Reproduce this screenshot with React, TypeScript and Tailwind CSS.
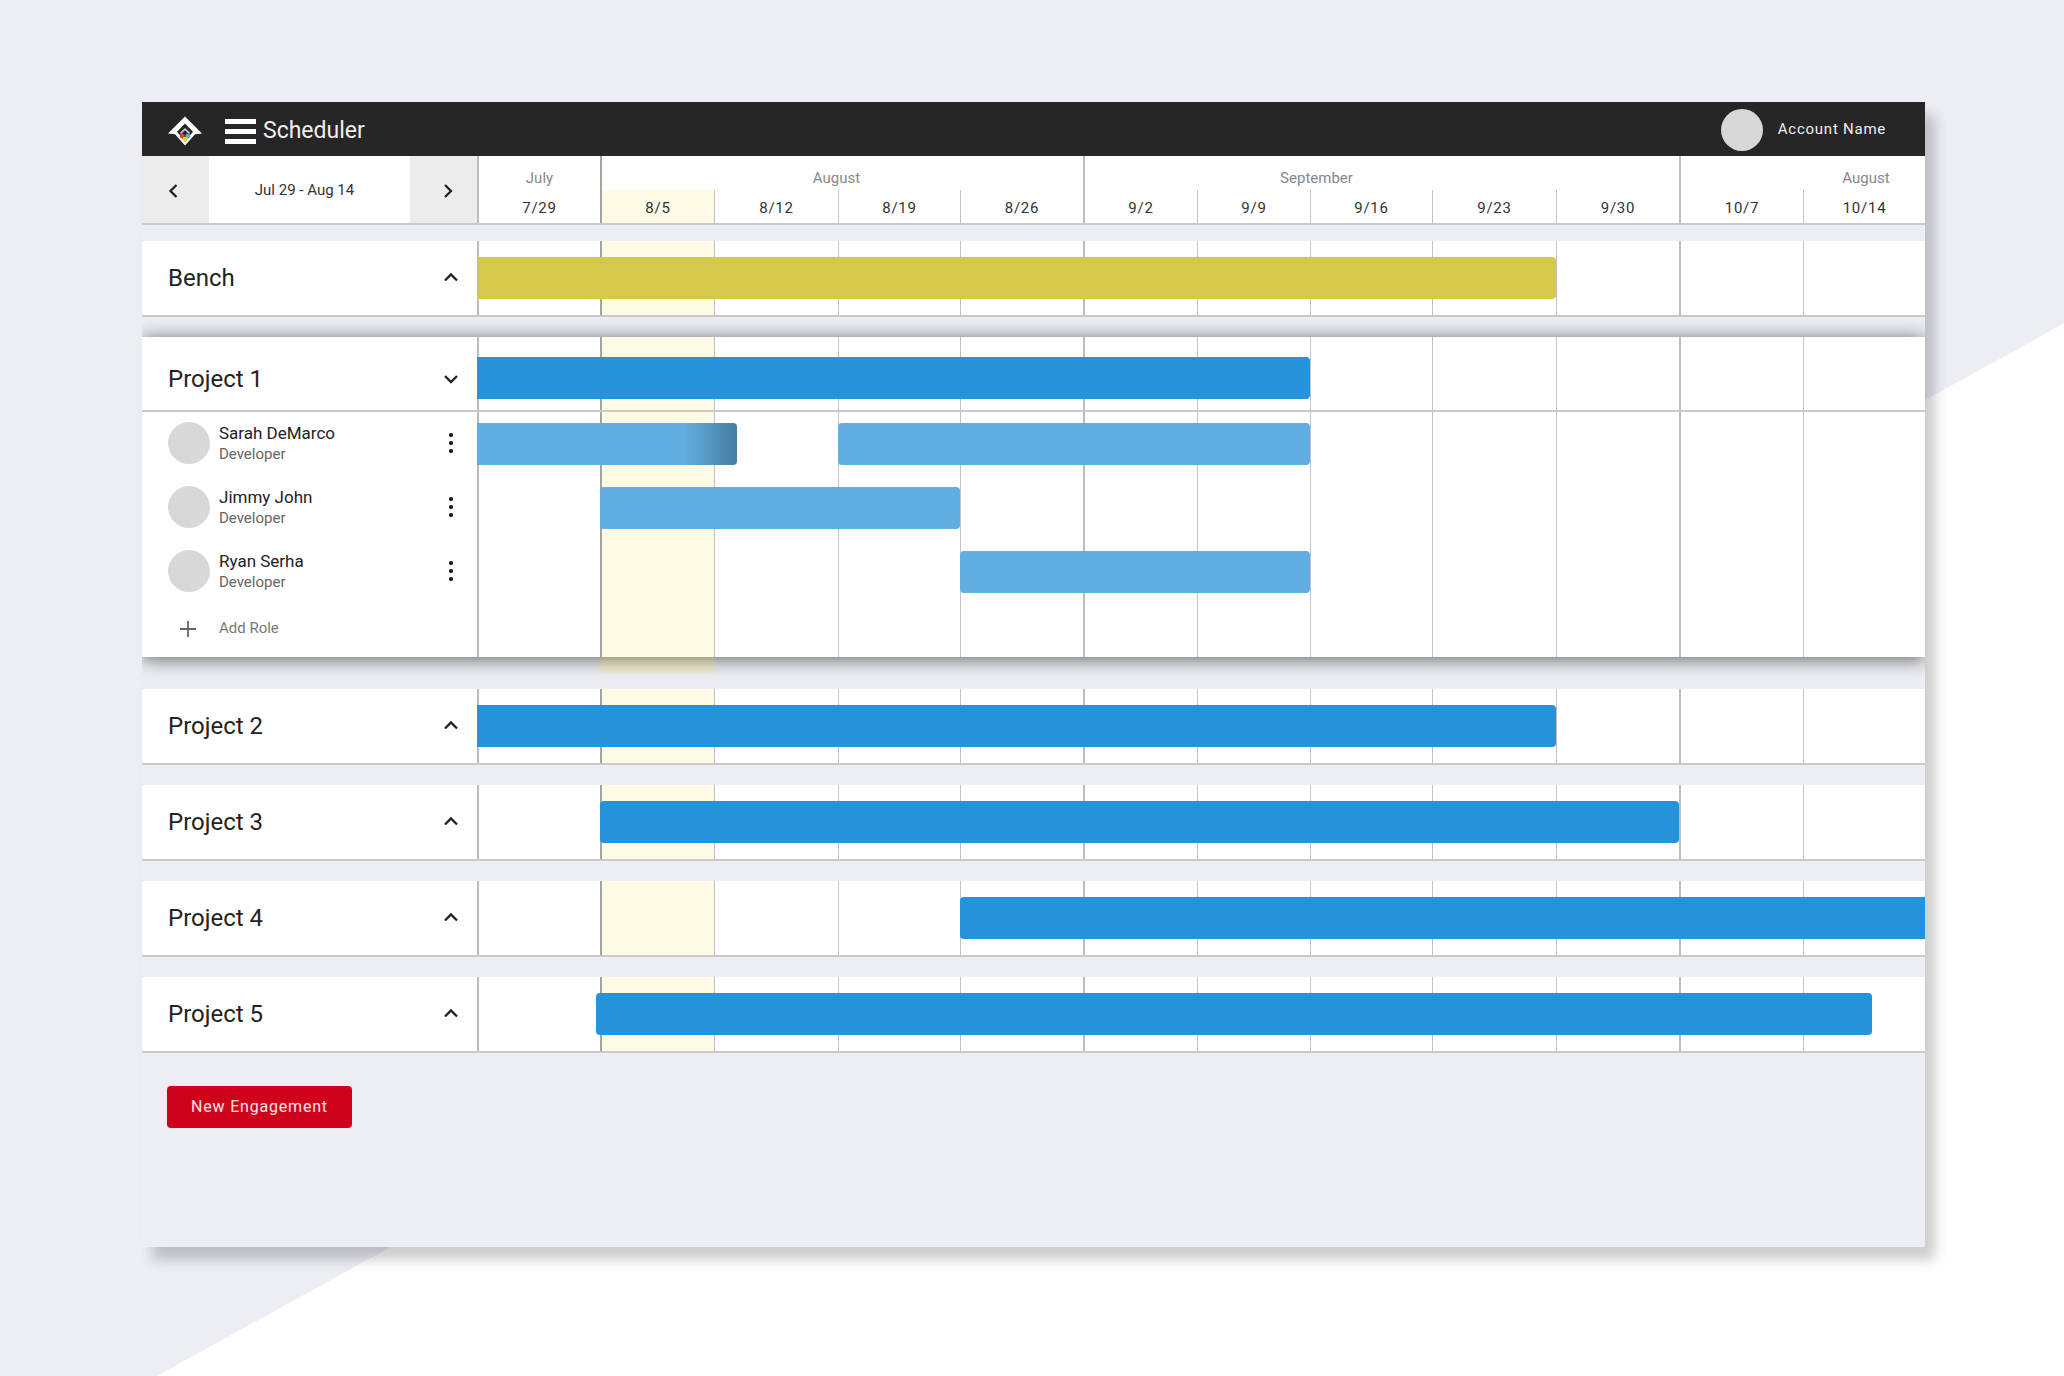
import React from "react";

type Bar = { from: number; to: number; tone?: "gold" | "blue" | "light"; fill?: number; fade?: boolean; early?: boolean };
type Member = { name: string; role: string; bars: Bar[] };
type Engagement = { name: string; bars: Bar[]; members?: Member[] };

const weeks = ["7/29", "8/5", "8/12", "8/19", "8/26", "9/2", "9/9", "9/16", "9/23", "9/30", "10/7", "10/14"];
const currentWeek = 1;
const monthStarts = [0, 1, 5, 10];

const bench: Engagement = { name: "Bench", bars: [{ from: 1, to: 10, tone: "gold" }] };
const project1: Engagement = {
  name: "Project 1",
  bars: [{ from: 1, to: 8 }],
  members: [
    {
      name: "Sarah DeMarco",
      role: "Developer",
      bars: [
        { from: 1, to: 4, tone: "light", fill: 72, fade: true },
        { from: 4, to: 8, tone: "light" },
      ],
    },
    { name: "Jimmy John", role: "Developer", bars: [{ from: 2, to: 5, tone: "light" }] },
    { name: "Ryan Serha", role: "Developer", bars: [{ from: 5, to: 8, tone: "light" }] },
  ],
};
const projects: Engagement[] = [
  { name: "Project 2", bars: [{ from: 1, to: 10 }] },
  { name: "Project 3", bars: [{ from: 2, to: 11 }] },
  { name: "Project 4", bars: [{ from: 5, to: 13 }] },
  { name: "Project 5", bars: [{ from: 2, to: 13, fill: 96, early: true }] },
];

const rowGrid = "grid grid-cols-[335px_minmax(0,1fr)]";
const weekGrid =
  "grid grid-cols-[123fr_114fr_124fr_122fr_123fr_114fr_113fr_122fr_124fr_123fr_124fr_122fr]";
const tones = { gold: "bg-[#d4c94b]", blue: "bg-[#2593d9]", light: "bg-[#62aee0]" };

function lineClass(i: number) {
  if (i === currentWeek) return "border-l-2 border-[#a5a5a0]";
  if (monthStarts.includes(i)) return "border-l-2 border-[#bdbdbd]";
  return "border-l border-[#c2c2c2]";
}

function Timeline({ bars = [], pad = "" }: { bars?: Bar[]; pad?: string }) {
  return (
    <div className={`${weekGrid} grid-rows-[minmax(0,1fr)]`}>
      {weeks.map((w, i) => (
        <div
          key={w}
          className={`row-start-1 ${lineClass(i)} ${i === currentWeek ? "bg-[#fdfae6]" : ""}`}
          style={{ gridColumn: i + 1 }}
        />
      ))}
      {bars.map((b) => (
        <div
          key={b.from}
          className={`row-start-1 flex items-center ${pad} ${b.early ? "-ml-1" : ""}`}
          style={{ gridColumn: `${b.from} / ${b.to}` }}
        >
          <div
            className={`h-[42px] ${tones[b.tone ?? "blue"]} ${b.from > 1 ? "rounded-l" : ""} ${
              b.to < 13 || b.fill ? "rounded-r" : ""
            } ${b.fade ? "bg-linear-to-r from-[#62aee0] from-80% to-[#457da3]" : ""}`}
            style={{ width: `${b.fill ?? 100}%` }}
          />
        </div>
      ))}
    </div>
  );
}

function Chevron({ d }: { d: string }) {
  return (
    <svg viewBox="0 0 16 16" className="size-4" fill="none" stroke="#222" strokeWidth="2.3" aria-hidden="true">
      <path d={d} />
    </svg>
  );
}

function EngagementHead({ item, open }: { item: Engagement; open?: boolean }) {
  return (
    <div className={`${rowGrid} ${open ? "h-[75px]" : "h-[76px]"} border-b-2 border-[#c9c9c9] bg-white`}>
      <div className={`flex items-center justify-between pl-[26px] pr-[18px] ${open ? "pt-[10px]" : ""}`}>
        <h2 className="text-2xl text-[#222]">{item.name}</h2>
        <button type="button" aria-label={`Toggle ${item.name}`} aria-expanded={!!open}>
          <Chevron d={open ? "M2 5 L8 11 L14 5" : "M2 10.5 L8 4.5 L14 10.5"} />
        </button>
      </div>
      <Timeline bars={item.bars} pad={open ? "pt-2" : ""} />
    </div>
  );
}

function MemberRow({ member }: { member: Member }) {
  return (
    <div className={`${rowGrid} h-16`}>
      <div className="flex items-center pb-[3px] pl-[26px] pr-[18px]">
        <div className="size-[42px] rounded-full bg-[#d8d8d8]" />
        <div className="ml-[9px] grow">
          <p className="text-[17px] leading-[22px] text-[#222]">{member.name}</p>
          <p className="text-[15px] leading-5 text-[#666]">{member.role}</p>
        </div>
        <button type="button" aria-label={`Options for ${member.name}`} className="flex w-4 justify-center">
          <svg viewBox="0 0 6 22" className="h-[22px] w-[6px]" fill="#111" aria-hidden="true">
            <circle cx="3" cy="3" r="2.1" />
            <circle cx="3" cy="11" r="2.1" />
            <circle cx="3" cy="19" r="2.1" />
          </svg>
        </button>
      </div>
      <Timeline bars={member.bars} />
    </div>
  );
}

function Logo() {
  return (
    <svg viewBox="0 0 34 30" className="h-[30px] w-[34px]" aria-label="Company logo" role="img">
      <path d="M17 0.5 L34 17.6 L27 18.2 L17 29.5 L7 18.2 L0 17.6 Z" fill="#fff" />
      <path d="M17 7.5 L25 15.8 L17 25.5 L9 15.8 Z" fill="#262626" />
      <path d="M12.5 17.4 L17 13.2 L21.5 17.4" fill="none" stroke="#ccc" strokeWidth="1.6" />
      <circle cx="14.2" cy="20" r="2.4" fill="#d9402f" />
      <circle cx="19.8" cy="20" r="2.4" fill="#4bb0dc" />
      <circle cx="17" cy="23.2" r="2.4" fill="#ecd02a" />
    </svg>
  );
}

export default function App() {
  return (
    <div className="relative min-h-screen bg-[#edeef4] pb-[120px] pl-[142px] pr-[139px] pt-[102px] font-[Roboto,sans-serif]">
      <div className="absolute inset-0 bg-white [clip-path:polygon(100%_23.5%,100%_100%,7.6%_100%)]" />
      <main className="relative overflow-hidden bg-[#edeef4] pb-[119px] shadow-[10px_13px_12px_rgba(0,0,0,0.2)]">
        <header className="flex h-[54px] items-center bg-[#262626] pl-[26px] pr-[39px] pt-1">
          <a href="#home" aria-label="Home">
            <Logo />
          </a>
          <button type="button" aria-label="Menu" className="ml-[23px] flex w-[31px] flex-col gap-[5px]">
            <span className="h-[5px] bg-white" />
            <span className="h-[5px] bg-white" />
            <span className="h-[5px] bg-white" />
          </button>
          <h1 className="ml-[7px] grow text-[23px] text-[#eee]">Scheduler</h1>
          <div className="flex items-center gap-[15px] pb-[3px]">
            <div className="size-[42px] rounded-full bg-[#d8d8d8]" />
            <span className="text-[15px] tracking-wider text-[#eee]">Account Name</span>
          </div>
        </header>

        <div className={`${rowGrid} h-[69px] border-b-2 border-[#c9c9c9] bg-white`}>
          <div className="flex items-stretch text-[15px] text-[#333]">
            <button type="button" aria-label="Previous weeks" className="flex w-[67px] items-center justify-center bg-[#ececec] pr-1 pt-0.5">
              <Chevron d="M10.5 2 L4.5 8 L10.5 14" />
            </button>
            <div className="flex grow items-center justify-center pr-[10px] pt-0.5">Jul 29 - Aug 14</div>
            <button type="button" aria-label="Next weeks" className="flex w-[67px] items-center justify-center bg-[#ececec] pl-2 pt-0.5">
              <Chevron d="M5 2 L11 8 L5 14" />
            </button>
          </div>
          <div className={`${weekGrid} grid-rows-[34px_minmax(0,1fr)] text-center text-[15px]`}>
            <div className="border-l-2 border-[#bdbdbd] pt-[11px] text-[#888]">July</div>
            <div className="col-span-4 border-l-2 border-[#a5a5a0] pr-3 pt-[11px] text-[#888]">August</div>
            <div className="col-span-4 border-l-2 border-[#bdbdbd] pr-2 pt-[11px] text-[#888]">September</div>
            <div />
            <div className="border-l-2 border-[#bdbdbd]" />
            <div className="pl-1 pt-[11px] text-[#888]">August</div>
            {weeks.map((w, i) => (
              <div
                key={w}
                className={`flex items-center justify-center pt-1 tracking-wider text-[#333] ${lineClass(i)} ${
                  i === currentWeek ? "bg-[#fdfae6]" : ""
                }`}
              >
                {w}
              </div>
            ))}
          </div>
        </div>

        <section className="mt-4">
          <EngagementHead item={bench} />
        </section>

        <section className="relative mt-5 bg-white shadow-[0_2px_18px_rgba(0,0,0,0.6)]">
          <EngagementHead item={project1} open />
          {project1.members?.map((m) => <MemberRow key={m.name} member={m} />)}
          <div className={`${rowGrid} h-[53px]`}>
            <button type="button" className="flex items-center pb-1 pl-[26px] text-[15px] text-[#777]">
              <span className="flex w-10 justify-center">
                <svg viewBox="0 0 16 16" className="size-4" stroke="#666" strokeWidth="1.8" aria-hidden="true">
                  <path d="M8 0 V16 M0 8 H16" />
                </svg>
              </span>
              <span className="ml-[11px]">Add Role</span>
            </button>
            <Timeline />
          </div>
          <div className={`${rowGrid} absolute inset-x-0 top-full h-4`}>
            <div />
            <div className={weekGrid}>
              <div className="col-start-2 bg-[#f8e71c]/15" />
            </div>
          </div>
        </section>

        <div className="mt-8 flex flex-col gap-5">
          {projects.map((p) => (
            <section key={p.name}>
              <EngagementHead item={p} />
            </section>
          ))}
        </div>

        <button
          type="button"
          className="ml-[25px] mt-[33px] flex h-[42px] w-[185px] items-center justify-center rounded bg-[#d0021b] text-base tracking-wider text-white/90"
        >
          New Engagement
        </button>
      </main>
    </div>
  );
}
